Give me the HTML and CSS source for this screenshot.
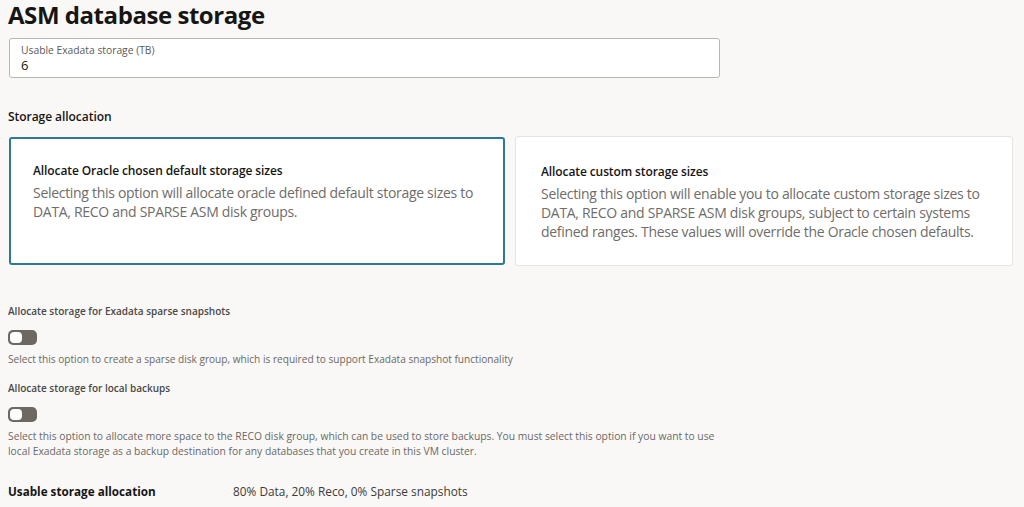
FILE: index.html
```html
<!DOCTYPE html>
<html lang="en">
<head>
<meta charset="utf-8">
<title>ASM database storage</title>
<link rel="stylesheet" href="styles.css">
</head>
<body>
<main class="page">
  <h1 class="title">ASM database storage</h1>

  <div class="field">
    <label class="field-label">Usable Exadata storage (TB)</label>
    <div class="field-value">6</div>
  </div>

  <h2 class="section-label">Storage allocation</h2>

  <div class="cards">
    <div class="card card-selected">
      <div class="card-title">Allocate Oracle chosen default storage sizes</div>
      <div class="card-desc">Selecting this option will allocate oracle defined default storage sizes to DATA, RECO and SPARSE ASM disk groups.</div>
    </div>
    <div class="card">
      <div class="card-title">Allocate custom storage sizes</div>
      <div class="card-desc">Selecting this option will enable you to allocate custom storage sizes to DATA, RECO and SPARSE ASM disk groups, subject to certain systems defined ranges. These values will override the Oracle chosen defaults.</div>
    </div>
  </div>

  <div class="option option-first">
    <div class="option-label">Allocate storage for Exadata sparse snapshots</div>
    <span class="toggle"><span class="knob"></span></span>
    <div class="option-help">Select this option to create a sparse disk group, which is required to support Exadata snapshot functionality</div>
  </div>

  <div class="option">
    <div class="option-label">Allocate storage for local backups</div>
    <span class="toggle"><span class="knob"></span></span>
    <div class="option-help help-wrap">Select this option to allocate more space to the RECO disk group, which can be used to store backups. You must select this option if you want to use local Exadata storage as a backup destination for any databases that you create in this VM cluster.</div>
  </div>

  <div class="summary">
    <div class="summary-label">Usable storage allocation</div>
    <div class="summary-value">80% Data, 20% Reco, 0% Sparse snapshots</div>
  </div>
</main>
</body>
</html>
```

FILE: styles.css
```css
* { box-sizing: border-box; }
html, body { margin: 0; padding: 0; }
body {
  background: #f9f8f6;
  font-family: "Open Sans", "Noto Sans", sans-serif;
  color: #161513;
}
.page {
  padding: 0 8px;
}
.title {
  margin: 0;
  font-size: 24px;
  font-weight: 700;
  line-height: 29px;
  color: #161513;
  letter-spacing: -0.45px;
}
.field {
  margin-top: 9px;
  margin-left: 1px;
  width: 711px;
  height: 40px;
  background: #fff;
  border: 1px solid #b8b6b3;
  border-radius: 3px;
  padding: 5px 11px 0;
}
.field-label {
  display: block;
  font-size: 10.3px;
  line-height: 13px;
  color: #5c5a57;
}
.field-value {
  font-size: 13px;
  line-height: 17px;
  color: #161513;
}
.section-label {
  margin: 30px 0 0;
  font-size: 12px;
  font-weight: 600;
  line-height: 17px;
  color: #161513;
  letter-spacing: -0.05px;
}
.cards {
  display: flex;
  gap: 10px;
  margin-top: 11px;
  margin-left: 1px;
  align-items: center;
}
.card {
  flex: 0 0 auto;
  width: 498px;
  height: 130px;
  background: #fff;
  border: 1px solid #e6e4e1;
  border-radius: 3px;
  padding: 26px 20px 0 25px;
}
.card-selected {
  width: 496px;
  height: 128px;
  border: 2px solid #2c7896;
  padding: 23px 16px 0 22px;
}
.card-title {
  font-size: 12px;
  font-weight: 600;
  line-height: 17px;
  color: #161513;
  letter-spacing: -0.1px;
}
.card-desc {
  margin-top: 4px;
  font-size: 14px;
  line-height: 19px;
  color: #6f6c69;
  letter-spacing: -0.3px;
}
.option {
  margin-top: 14px;
}
.option-first {
  margin-top: 38px;
}
.option-label {
  font-size: 10px;
  font-weight: 600;
  line-height: 14px;
  color: #4a4846;
}
.toggle {
  display: block;
  position: relative;
  margin-top: 12px;
  width: 29px;
  height: 15px;
  border-radius: 5px;
  background: #6e6862;
}
.knob {
  position: absolute;
  left: 2px;
  top: 2px;
  width: 12px;
  height: 11px;
  border-radius: 4px;
  background: #fff;
}
.option-help {
  margin-top: 7px;
  font-size: 10.1px;
  line-height: 15px;
  color: #6a6865;
}
.help-wrap {
  width: 712px;
  font-size: 10.3px;
}
.summary {
  display: flex;
  margin-top: 24px;
  align-items: baseline;
}
.summary-label {
  width: 225px;
  font-size: 11.7px;
  font-weight: 700;
  color: #161513;
}
.summary-value {
  font-size: 11.85px;
  color: #3c3a38;
}
```
